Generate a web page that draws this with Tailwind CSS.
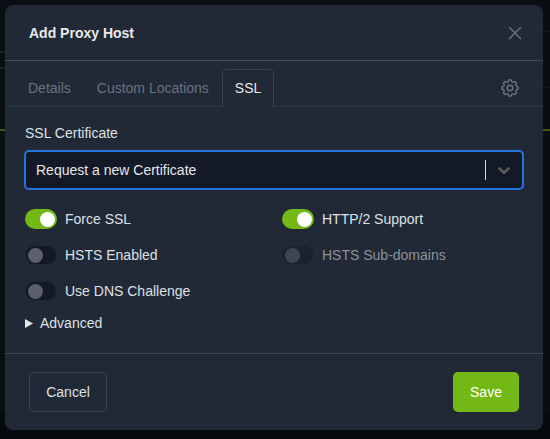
<!DOCTYPE html>
<html lang="en">
<head>
    <meta charset="UTF-8">
    <title>Add Proxy Host</title>
    <script src="https://cdn.jsdelivr.net/npm/@tailwindcss/browser@4"></script>
</head>
<body class="relative w-[550px] h-[439px] overflow-hidden bg-[#0a0d12] font-['Liberation_Sans',Arial,sans-serif] text-sm text-[#dce1e6]">
    <!-- page behind the backdrop -->
    <div class="absolute left-0 right-0 top-[31px] h-px bg-[#12161b]"></div>
    <div class="absolute left-0 right-0 top-[87px] h-px bg-[#12161b]"></div>
    <div class="absolute left-0 right-0 top-[129px] h-[2px] bg-[#43560f]"></div>
    <div class="absolute left-0 right-0 top-[412px] bottom-0 bg-[#06090d]"></div>
    <div class="absolute left-[-6px] top-[51px] w-[18px] h-[18px] rounded-full border border-[#2a2d31]"></div>

    <div class="absolute left-[5px] top-[5px] w-[538px] h-[425px] flex flex-col rounded-lg bg-[#212936]">
        <!-- header -->
        <div class="flex items-center justify-between h-[56px] shrink-0 pl-6 pr-[17px] border-b border-[#444b57]">
            <h2 class="font-bold text-sm text-[#e8eaed]">Add Proxy Host</h2>
            <svg class="w-[22px] h-[22px] text-[#6e7580]" viewBox="0 0 24 24" fill="none" stroke="currentColor" stroke-width="1.5" stroke-linecap="round" stroke-linejoin="round"><path d="M18 6 6 18"/><path d="m6 6 12 12"/></svg>
        </div>
        <!-- tabs -->
        <div class="flex items-end justify-between h-[46px] shrink-0 pl-[10px] pr-[22px] border-b border-[#2c3645]">
            <div class="flex items-end -mb-px">
                <span class="px-[13px] h-[37px] leading-[37px] text-[#69727f]">Details</span>
                <span class="px-[13px] h-[37px] leading-[37px] text-[#69727f]">Custom Locations</span>
                <span class="px-3 h-[38px] leading-[37px] text-[#e4e7ea] bg-[#212936] border border-b-0 border-[#37414f] rounded-t-[5px]">SSL</span>
            </div>
            <svg class="w-[22px] h-[22px] mb-[7px] text-[#6e7580]" viewBox="0 0 24 24" fill="none" stroke="currentColor" stroke-width="1.5" stroke-linecap="round" stroke-linejoin="round"><path d="M10.325 4.317c.426-1.756 2.924-1.756 3.35 0a1.724 1.724 0 0 0 2.573 1.066c1.543-.94 3.31.826 2.37 2.37a1.724 1.724 0 0 0 1.065 2.572c1.756.426 1.756 2.924 0 3.35a1.724 1.724 0 0 0-1.066 2.573c.94 1.543-.826 3.31-2.37 2.37a1.724 1.724 0 0 0-2.572 1.065c-.426 1.756-2.924 1.756-3.35 0a1.724 1.724 0 0 0-2.573-1.066c-1.543.94-3.31-.826-2.37-2.37a1.724 1.724 0 0 0-1.065-2.572c-1.756-.426-1.756-2.924 0-3.35a1.724 1.724 0 0 0 1.066-2.573c-.94-1.543.826-3.31 2.37-2.37 1 .608 2.296.07 2.572-1.065z"/><circle cx="12" cy="12" r="3"/></svg>
        </div>
        <!-- body -->
        <div class="flex-1 pl-[19px] pr-[19px] pt-[18px]">
            <label class="block h-[17px] leading-[17px] ml-px text-[#dce1e6]">SSL Certificate</label>
            <div class="flex items-center justify-between h-[40px] mt-[8px] pl-[10px] pr-[10px] rounded-[5px] border-2 border-[#2673e0] bg-[#131926]">
                <span class="text-[#e4e7ea]">Request a new Certificate</span>
                <div class="flex items-center gap-[10px]">
                    <div class="w-px h-[20px] bg-[#d4d6d9]"></div>
                    <svg class="w-[16px] h-[16px] text-[#625f5d]" viewBox="0 0 16 16" fill="none" stroke="currentColor" stroke-width="2.4"><path d="M2.6 5.6 8 10.8l5.4-5.2"/></svg>
                </div>
            </div>
            <div class="grid grid-cols-[257px_1fr] mt-[19px] ml-px">
                <div class="flex items-center h-[20px] gap-2">
                    <div class="flex items-center justify-end w-[32px] h-[20px] pr-[2px] rounded-full bg-[#74b816]"><div class="w-[15px] h-[15px] rounded-full bg-white"></div></div>
                    <span class="text-[#dce1e6]">Force SSL</span>
                </div>
                <div class="flex items-center h-[20px] gap-2">
                    <div class="flex items-center justify-end w-[32px] h-[20px] pr-[2px] rounded-full bg-[#74b816]"><div class="w-[15px] h-[15px] rounded-full bg-white"></div></div>
                    <span class="text-[#dce1e6]">HTTP/2 Support</span>
                </div>
                <div class="flex items-center h-[20px] gap-2 mt-[16px]">
                    <div class="flex items-center w-[32px] h-[20px] pl-[2px] rounded-full bg-[#131926] border border-[#1e2634]"><div class="w-[15px] h-[15px] rounded-full bg-[#5b606b]"></div></div>
                    <span class="text-[#dce1e6]">HSTS Enabled</span>
                </div>
                <div class="flex items-center h-[20px] gap-2 mt-[16px]">
                    <div class="flex items-center w-[32px] h-[20px] pl-[2px] rounded-full bg-[#1a2130] border border-[#1e2634]"><div class="w-[15px] h-[15px] rounded-full bg-[#3e4553]"></div></div>
                    <span class="text-[#8b919b]">HSTS Sub-domains</span>
                </div>
                <div class="flex items-center h-[20px] gap-2 mt-[16px]">
                    <div class="flex items-center w-[32px] h-[20px] pl-[2px] rounded-full bg-[#131926] border border-[#1e2634]"><div class="w-[15px] h-[15px] rounded-full bg-[#5b606b]"></div></div>
                    <span class="text-[#dce1e6]">Use DNS Challenge</span>
                </div>
            </div>
            <div class="flex items-center h-[20px] gap-[7px] mt-[12px] ml-px">
                <svg class="w-[8px] h-[9px] text-[#e4e7ea]" viewBox="0 0 8 9" fill="currentColor"><path d="M0 0 8 4.5 0 9z"/></svg>
                <span class="text-[#dce1e6]">Advanced</span>
            </div>
        </div>
        <!-- footer -->
        <div class="flex items-start justify-between h-[77px] shrink-0 pt-[18px] pl-6 pr-6 border-t border-[#3f4754]">
            <button class="w-[78px] h-[40px] rounded-[5px] border border-[#3a4453] text-[#dce1e6]">Cancel</button>
            <button class="w-[66px] h-[40px] rounded-[5px] bg-[#74b816] text-white">Save</button>
        </div>
    </div>
</body>
</html>
